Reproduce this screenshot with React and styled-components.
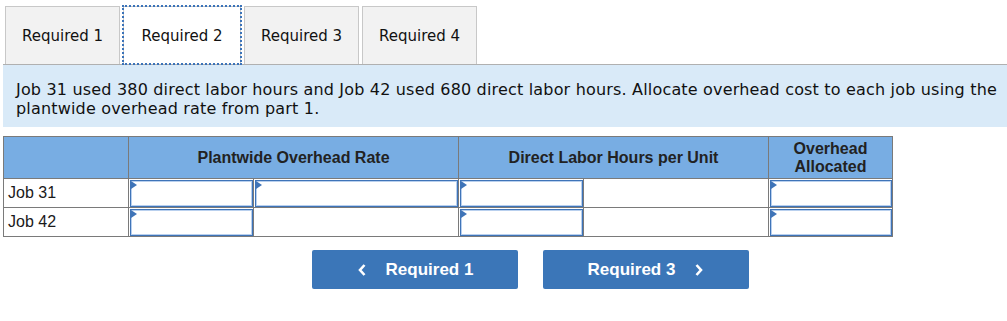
import React from 'react';
import styled, { createGlobalStyle } from 'styled-components';

const GlobalStyle = createGlobalStyle`
  body {
    margin: 0;
    background: #fff;
    font-family: "DejaVu Sans", Verdana, sans-serif;
  }
`;

const Page = styled.div`
  padding: 6px 0 0 3px;
`;

const TabBar = styled.div`
  display: flex;
  gap: 3px;
  padding-left: 2px;
  border-bottom: 1px solid #b0b0b0;
`;

const Tab = styled.div`
  width: ${(p) => (p.$active ? '118px' : '115px')};
  height: 58px;
  display: flex;
  align-items: center;
  justify-content: center;
  font-size: 15px;
  color: #111;
  box-sizing: border-box;
  background: ${(p) => (p.$active ? '#fff' : '#f2f2f2')};
  border: 1px solid #c8c8c8;
  border-bottom: none;
  outline: ${(p) => (p.$active ? '2px dotted #3b73b9' : 'none')};
  outline-offset: -1px;
`;

const Instructions = styled.div`
  background: #d9eaf8;
  padding: 15px 0 0 13px;
  font-size: 16px;
  letter-spacing: 0.18px;
  line-height: 19px;
  white-space: nowrap;
  overflow: hidden;
  color: #111;
  height: 62px;
  box-sizing: border-box;
`;

const Grid = styled.table`
  margin-top: 9px;
  border-collapse: collapse;
  table-layout: fixed;
  font-family: "Liberation Sans", Arial, sans-serif;
  font-size: 16px;
  color: #1a1a1a;
`;

const Head = styled.th`
  background: #78ade3;
  border: 1px solid #7a7a7a;
  height: 41px;
  padding: 0 4px;
  font-weight: bold;
  line-height: 18px;
  text-align: center;
  color: #222;
`;

const Cell = styled.td`
  border: 1px solid #7a7a7a;
  height: 28px;
  padding: 0;
`;

const Label = styled(Cell)`
  padding-left: 4px;
`;

const Entry = styled.div`
  position: relative;
  height: 27px;
  margin: 0 0 0 1px;
  box-sizing: border-box;
  border: 1px solid #3f74b8;
  box-shadow: inset 0 0 0 1px #b9d0ee;
  background: #fff;

  &::before {
    content: '';
    position: absolute;
    left: 0;
    top: 0;
    border-top: 4px solid transparent;
    border-bottom: 4px solid transparent;
    border-left: 6px solid #3f74b8;
  }
`;

const Nav = styled.div`
  display: flex;
  gap: 25px;
  margin: 13px 0 0 309px;
`;

const NavButton = styled.div`
  width: 206px;
  height: 39px;
  background: #3b76b8;
  border-radius: 2px;
  color: #fff;
  font-family: "Liberation Sans", Arial, sans-serif;
  font-weight: bold;
  font-size: 17px;
  display: flex;
  align-items: center;
  justify-content: center;
  gap: 19px;

  svg {
    width: 10px;
    height: 14px;
  }
`;

const Chevron = ({ dir }) => (
  <svg viewBox="0 0 10 14">
    <path
      d={dir === 'left' ? 'M7.5 2 L3 7 L7.5 12' : 'M2.5 2 L7 7 L2.5 12'}
      fill="none"
      stroke="#fff"
      strokeWidth="2.6"
    />
  </svg>
);

const rows = [
  { label: 'Job 31', filled: [true, true, true, false, true] },
  { label: 'Job 42', filled: [true, false, true, false, true] },
];

export default function App() {
  return (
    <Page>
      <GlobalStyle />
      <TabBar>
        <Tab>Required 1</Tab>
        <Tab $active>Required 2</Tab>
        <Tab>Required 3</Tab>
        <Tab>Required 4</Tab>
      </TabBar>
      <Instructions>
        Job 31 used 380 direct labor hours and Job 42 used 680 direct labor hours. Allocate overhead cost to each job using the
        <br />
        plantwide overhead rate from part 1.
      </Instructions>
      <Grid>
        <colgroup>
          <col style={{ width: 125 }} />
          <col style={{ width: 125 }} />
          <col style={{ width: 205 }} />
          <col style={{ width: 125 }} />
          <col style={{ width: 185 }} />
          <col style={{ width: 124 }} />
        </colgroup>
        <thead>
          <tr>
            <Head />
            <Head colSpan={2}>Plantwide Overhead Rate</Head>
            <Head colSpan={2}>Direct Labor Hours per Unit</Head>
            <Head>Overhead Allocated</Head>
          </tr>
        </thead>
        <tbody>
          {rows.map((r) => (
            <tr key={r.label}>
              <Label>{r.label}</Label>
              {r.filled.map((f, i) => (
                <Cell key={i}>{f && <Entry />}</Cell>
              ))}
            </tr>
          ))}
        </tbody>
      </Grid>
      <Nav>
        <NavButton>
          <Chevron dir="left" />
          Required 1
        </NavButton>
        <NavButton>
          Required 3
          <Chevron dir="right" />
        </NavButton>
      </Nav>
    </Page>
  );
}
